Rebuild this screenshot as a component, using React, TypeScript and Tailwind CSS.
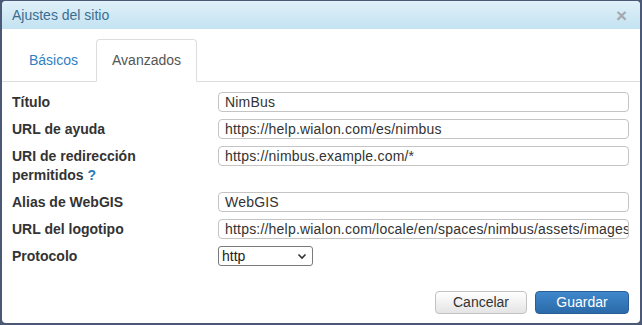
import React from "react";

const rows: { label: React.ReactNode; value?: string; select?: boolean }[] = [
  { label: "Título", value: "NimBus" },
  { label: "URL de ayuda", value: "https://help.wialon.com/es/nimbus" },
  {
    label: (
      <>
        URI de redirección
        <br />
        permitidos <span className="text-[#2a7ab8]">?</span>
      </>
    ),
    value: "https://nimbus.example.com/*",
  },
  { label: "Alias de WebGIS", value: "WebGIS" },
  {
    label: "URL del logotipo",
    value: "https://help.wialon.com/locale/en/spaces/nimbus/assets/images/logo.png",
  },
  { label: "Protocolo", select: true },
];

export default function App() {
  return (
    <div
      className="w-[642px] h-[325px] bg-[#4b5876] pt-px px-[2px] pb-[2px]"
      style={{ fontFamily: '"Liberation Sans", Arial, sans-serif' }}
    >
      <div className="h-full bg-white rounded-[4px] overflow-hidden flex flex-col">
        <div className="h-[28px] shrink-0 flex items-center justify-between pl-[10px] pr-[13px] bg-gradient-to-b from-[#dff0f9] to-[#c4e2f1]">
          <span className="text-[14px] text-[#3b6d90] leading-none">Ajustes del sitio</span>
          <span className="text-[19px] font-bold text-[#a3a9ad] leading-none">×</span>
        </div>

        <div className="pt-[10px] pl-[11px] flex border-b border-[#dddddd]">
          <div className="px-[15px] py-[10px] mr-[2px] text-[14px] leading-[20px] text-[#2f80c4] border border-transparent">
            Básicos
          </div>
          <div className="px-[15px] py-[10px] -mb-px text-[14px] leading-[20px] text-[#555555] bg-white border border-[#dddddd] border-b-white rounded-t-[4px]">
            Avanzados
          </div>
        </div>

        <div className="pt-[10px] pl-[10px] pr-[11px] flex flex-col gap-[7px]">
          {rows.map((r, i) => (
            <div key={i} className="flex items-start">
              <div className="w-[206px] shrink-0 pr-[8px] pt-px text-[14px] font-bold leading-[19px] text-[#333333]">
                {r.label}
              </div>
              {r.select ? (
                <div className="w-[95px] h-[20px] border border-[#7a7a7a] rounded-[3px] flex items-center justify-between pl-[3px] pr-[5px] text-[14px] text-[#222222]">
                  <span>http</span>
                  <svg width="10" height="7" viewBox="0 0 10 7">
                    <path d="M1.5 1.5 L5 5 L8.5 1.5" fill="none" stroke="#333" strokeWidth="1.6" />
                  </svg>
                </div>
              ) : (
                <div className="flex-1 min-w-0 h-[20px] border border-[#c4c4c4] rounded-[4px] px-[6px] flex items-center overflow-hidden whitespace-nowrap text-[14px] tracking-[0.2px] text-[#333333]">
                  {r.value}
                </div>
              )}
            </div>
          ))}
        </div>

        <div className="mt-auto flex justify-end gap-[8px] pr-[11px] pb-[9px]">
          <div className="w-[92px] h-[23px] flex items-center justify-center text-[14px] text-[#333333] border border-[#c2c2c2] rounded-[4px] bg-gradient-to-b from-[#ffffff] to-[#e4e4e4]">
            Cancelar
          </div>
          <div className="w-[94px] h-[23px] flex items-center justify-center text-[14px] text-white border border-[#2a5f96] rounded-[4px] bg-gradient-to-b from-[#3f88cb] to-[#2a6aa9]">
            Guardar
          </div>
        </div>
      </div>
    </div>
  );
}
